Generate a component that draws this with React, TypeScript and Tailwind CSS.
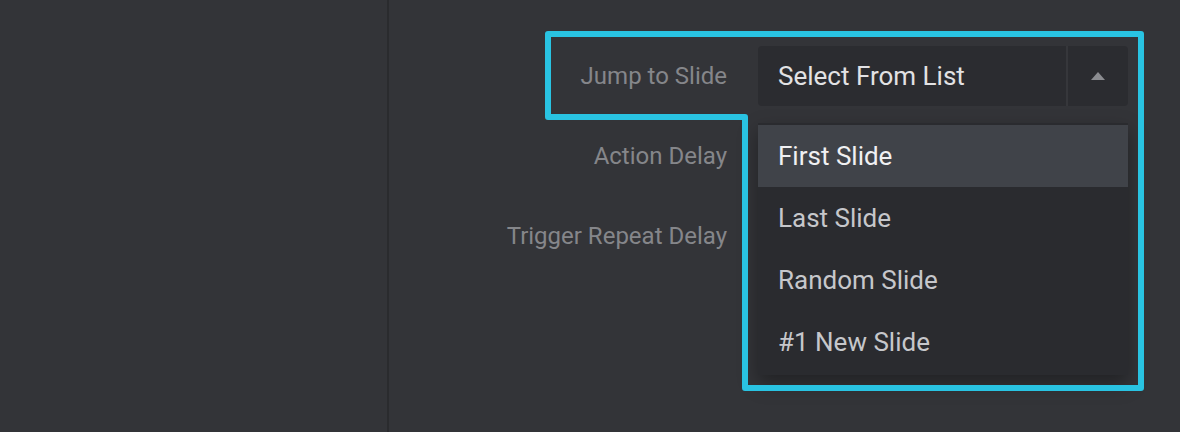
import * as React from "react";

const OPTIONS = ["First Slide", "Last Slide", "Random Slide", "#1 New Slide"];

const LABELS = ["Jump to Slide", "Action Delay", "Trigger Repeat Delay"];

function SelectBox() {
  return (
    <div className="relative w-[370px]">
      <div className="flex h-[60px] gap-[2px] rounded-[4px] bg-[#36373b]">
        <div className="flex flex-1 items-center rounded-l-[4px] bg-[#2b2c30] pl-5 text-[26px] text-[#e2e2e4]">
          Select From List
        </div>
        <div className="flex w-[60px] items-center justify-center rounded-r-[4px] bg-[#2b2c30]">
          <svg width="14" height="8" viewBox="0 0 14 8">
            <path d="M7 0 L14 8 L0 8 Z" fill="#8b8c90" />
          </svg>
        </div>
      </div>

      {/* open menu */}
      <ul className="absolute left-0 top-[77px] z-10 w-[370px] bg-[#2a2b2f] py-[2px] shadow-[0_8px_18px_rgba(0,0,0,0.35)]">
        {OPTIONS.map((opt, i) => (
          <li
            key={opt}
            className={
              i === 0
                ? "flex h-[62px] items-center bg-[#404349] pl-5 text-[26px] text-[#f0f0f2]"
                : "flex h-[62px] items-center pl-5 text-[26px] text-[#c6c7cb]"
            }
          >
            {opt}
          </li>
        ))}
      </ul>
    </div>
  );
}

export default function App() {
  return (
    <div
      className="relative flex h-[432px] w-[1180px] overflow-hidden bg-[#333438]"
      style={{ fontFamily: "Roboto, 'Liberation Sans', sans-serif" }}
    >
      <div className="w-[387px] shrink-0" />
      <div className="w-[2px] shrink-0 bg-[#2a2b2e]" />

      <div className="flex flex-1 flex-col gap-5 pt-[46px]">
        {LABELS.map((label, i) => (
          <div key={label} className="flex h-[60px] items-center">
            <div className="w-[338px] text-right text-[24px] text-[#85868a]">{label}</div>
            {i === 0 && (
              <div className="ml-[31px]">
                <SelectBox />
              </div>
            )}
          </div>
        ))}
      </div>

      {/* highlight outline */}
      <svg className="pointer-events-none absolute left-0 top-0 z-20" width="1180" height="432">
        <path
          d="M548 34 L1141 34 L1141 388 L745 388 L745 117 L548 117 Z"
          fill="none"
          stroke="#29c3e2"
          strokeWidth="6"
          strokeLinejoin="round"
        />
      </svg>
    </div>
  );
}
